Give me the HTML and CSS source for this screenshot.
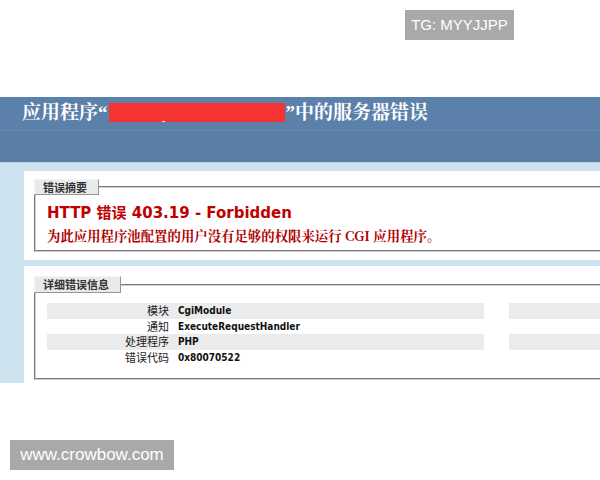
FILE: index.html
```html
<!DOCTYPE html>
<html lang="zh">
<head>
<meta charset="utf-8">
<title>IIS 403.19</title>
<link rel="stylesheet" href="styles.css">
</head>
<body>
<div class="shot">
  <div class="header">
    <h1>应用程序“<span class="redact"><span class="under"></span></span>”中的服务器错误</h1>
  </div>
  <div class="server"></div>
  <div class="content">
    <div class="card card-summary">
      <fieldset>
        <legend>错误摘要</legend>
        <h2>HTTP 错误 403.19 - Forbidden</h2>
        <p class="desc">为此应用程序池配置的用户没有足够的权限来运行 CGI 应用程序。</p>
      </fieldset>
    </div>
    <div class="card card-detail">
      <fieldset>
        <legend>详细错误信息</legend>
        <div class="details">
          <table class="left">
            <tr class="alt"><th>模块</th><td>CgiModule</td></tr>
            <tr><th>通知</th><td>ExecuteRequestHandler</td></tr>
            <tr class="alt"><th>处理程序</th><td>PHP</td></tr>
            <tr><th>错误代码</th><td>0x80070522</td></tr>
          </table>
          <table class="right">
            <tr class="alt"><th></th><td></td></tr>
            <tr><th></th><td></td></tr>
            <tr class="alt"><th></th><td></td></tr>
            <tr><th></th><td></td></tr>
          </table>
        </div>
      </fieldset>
    </div>
  </div>
</div>
<div class="wm wm-tg">TG: MYYJJPP</div>
<div class="wm wm-site">www.crowbow.com</div>
</body>
</html>
```

FILE: styles.css
```css
html, body {
  margin: 0;
  padding: 0;
  background: #ffffff;
  overflow: hidden;
}
body {
  width: 600px;
  height: 480px;
  position: relative;
  font-family: "DejaVu Sans", "Noto Sans CJK SC", sans-serif;
}
.shot {
  margin-top: 97px;
  height: 286px;
  width: 600px;
  overflow: hidden;
  background: #cde2ef;
}
.header {
  height: 33px;
  width: 1300px;
  background: #5b80aa;
  padding-left: 22px;
  box-sizing: border-box;
}
.header h1 {
  margin: 0;
  font-family: "Liberation Serif", "Noto Serif CJK SC", "Noto Sans CJK SC", serif;
  font-weight: bold;
  font-size: 19px;
  line-height: 31px;
  color: #ffffff;
  white-space: nowrap;
}
.redact {
  display: inline-block;
  width: 176px;
  height: 19px;
  background: #f73434;
  vertical-align: -3px;
  position: relative;
  margin: 0 1px;
}
.under {
  position: absolute;
  left: 53px;
  bottom: 0;
  width: 3px;
  height: 1px;
  background: #ffe0e0;
}
.server {
  height: 31px;
  width: 1300px;
  background: #5a7ea6;
  border-top: 1px solid #6b8cb2;
  border-bottom: 1px solid #c1cfdd;
}
.content {
  width: 1300px;
  padding: 8px 0 0 24px;
}
.card {
  background: #ffffff;
  padding: 8px 0 8px 10px;
}
.card-detail {
  margin-top: 6px;
  padding-top: 10px;
}
fieldset {
  margin: 0;
  padding: 0 0 5px 11px;
  border: 2px groove #cfcfcf;
  border-right: none;
}
legend {
  margin-left: -13px;
  padding: 0 11px 0 8px;
  line-height: 14px;
  font-size: 11px;
  font-weight: bold;
  color: #333333;
  background: #eaeaea;
  border-top: 1px solid #f4f4f4;
  border-left: 1px solid #f4f4f4;
  border-right: 1px solid #969696;
  border-bottom: 1px solid #969696;
  font-family: "Noto Sans CJK SC", sans-serif;
}
.card-detail legend {
  line-height: 15px;
}
h2 {
  margin: 8px 0 0 0;
  font-size: 15px;
  line-height: 20px;
  color: #c00000;
  font-weight: bold;
  white-space: nowrap;
}
.desc {
  margin: 4px 0 0 0;
  font-size: 13.4px;
  line-height: 18px;
  color: #b00000;
  font-weight: bold;
  font-family: "Noto Serif CJK SC", "Noto Sans CJK SC", serif;
  white-space: nowrap;
}
.details {
  display: flex;
  gap: 25px;
  margin-top: 10px;
  padding-bottom: 8px;
}
table {
  border-collapse: collapse;
  border: none;
  font-size: 11px;
}
td, th {
  padding: 0;
  line-height: 15.5px;
  height: 15.5px;
  text-align: left;
  vertical-align: top;
  white-space: nowrap;
}
th {
  font-weight: normal;
  text-align: right;
  color: #222;
  font-family: "Noto Sans CJK SC", sans-serif;
}
td {
  font-family: "DejaVu Sans Condensed", "DejaVu Sans", sans-serif;
  font-size: 10px;
  font-weight: bold;
  color: #111;
}
.left { width: 437px; }
.left th { width: 122px; padding-right: 9px; }
.right { width: 700px; }
.right th { width: 142px; padding-right: 10px; }
tr.alt th, tr.alt td { background: #ebebeb; }
.wm {
  position: absolute;
  background: #a9a9a9;
  color: #ffffff;
  font-family: "Liberation Sans", Arial, sans-serif;
  text-align: center;
}
.wm-tg {
  left: 405px;
  top: 10px;
  width: 109px;
  height: 30px;
  line-height: 30px;
  font-size: 15px;
}
.wm-site {
  left: 10px;
  top: 440px;
  width: 164px;
  height: 30px;
  line-height: 30px;
  font-size: 17px;
}
```
